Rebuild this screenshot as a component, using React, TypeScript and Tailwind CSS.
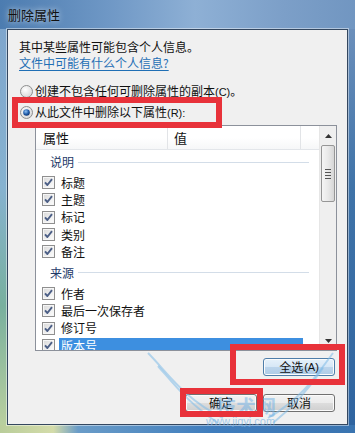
import React from "react";

const CJK = "font-['Microsoft_YaHei','Noto_Sans_CJK_SC',sans-serif]";

function Check() {
  return (
    <svg width="13" height="13" viewBox="0 0 13 13" className="shrink-0">
      <defs>
        <linearGradient id="cbg" x1="0" y1="0" x2="1" y2="1">
          <stop offset="0" stopColor="#dcdcdc" />
          <stop offset="1" stopColor="#fbfbfb" />
        </linearGradient>
      </defs>
      <rect x="0.5" y="0.5" width="12" height="12" fill="#f6f6f6" stroke="#8f8f8f" />
      <rect x="2" y="2" width="9" height="9" fill="url(#cbg)" />
      <path d="M3 6.3 L5.4 9 L10 3.2" stroke="#4c5f86" strokeWidth="1.9" fill="none" strokeLinejoin="round" />
    </svg>
  );
}

function Radio({ on }: { on?: boolean }) {
  return (
    <svg width="13" height="13" viewBox="0 0 13 13" className="shrink-0">
      <defs>
        <radialGradient id={on ? "rdon" : "rdoff"} cx="0.4" cy="0.35" r="0.7">
          <stop offset="0" stopColor="#ffffff" />
          <stop offset="1" stopColor="#d6d6d6" />
        </radialGradient>
        <radialGradient id="rdot" cx="0.4" cy="0.35" r="0.7">
          <stop offset="0" stopColor="#8fc2f5" />
          <stop offset="0.6" stopColor="#1e5aa8" />
          <stop offset="1" stopColor="#0e2f66" />
        </radialGradient>
      </defs>
      <circle cx="6.5" cy="6.5" r="6" fill={on ? "url(#rdon)" : "url(#rdoff)"} stroke="#8e8f8f" />
      {on && <circle cx="6.5" cy="6.5" r="3.3" fill="url(#rdot)" />}
    </svg>
  );
}

function Item({ label, selected }: { label: string; selected?: boolean }) {
  return (
    <div className="flex h-[17.3px] items-center">
      <div className="ml-[6px]">
        <Check />
      </div>
      <div
        className={
          "ml-[4px] flex h-[16px] items-center pl-[2px] " +
          (selected ? "w-[244px] bg-[#3d8fe0] text-white" : "text-[#111]")
        }
      >
        {label}
      </div>
    </div>
  );
}

function Group({ label }: { label: string }) {
  return (
    <div className="flex h-[20px] items-center pl-[14px] pr-[10px]">
      <span className="text-[#1e3a68]">{label}</span>
      <div className="ml-[4px] h-px flex-1 bg-[#d3dde8]" />
    </div>
  );
}

function Btn({ children, blue }: { children: React.ReactNode; blue?: boolean }) {
  return (
    <div
      className={
        "flex h-[18px] w-[72px] items-center justify-center rounded-[3px] border text-[12px] text-[#111] shadow-[inset_0_0_0_1px_#fbfbfb] " +
        (blue
          ? "border-[#4e7eaa] bg-[linear-gradient(#e6f1fa_0%,#d6e7f6_50%,#bcd5ec_50%,#aecbe6_100%)]"
          : "border-[#707070] bg-[linear-gradient(#f2f2f2_0%,#ebebeb_50%,#dddddd_50%,#cfcfcf_100%)]")
      }
    >
      {children}
    </div>
  );
}

export default function App() {
  return (
    <div className={"relative flex h-[433px] w-[355px] flex-col overflow-hidden bg-[#3f73a8] text-[12px] " + CJK}>
      {/* title bar */}
      <div className="flex h-[29px] items-center bg-[linear-gradient(90deg,#4c7cb0_0%,#6e97c5_30%,#8eb0d5_55%,#7c9fc8_80%,#7196c1_100%)] pl-[8px]">
        <span className="text-[13px] text-[#111] [text-shadow:0_0_6px_rgba(255,255,255,0.8)]">删除属性</span>
      </div>
      <div className="flex h-[396px]">
        <div className="w-[7px] bg-[linear-gradient(#7fa6cd_0%,#86b2d0_40%,#78b09e_70%,#b9cf9e_100%)]" />
        {/* client */}
        <div className="relative flex w-[341px] flex-col border border-[#34475f] bg-[#f0f0f0] pl-[11px] pt-[9px] shadow-[0_0_0_1px_rgba(255,255,255,0.45)]">
          <div className="h-[16px] leading-[16px] text-[#111]">其中某些属性可能包含个人信息。</div>
          <div className="h-[16px] leading-[16px]">
            <span className="text-[#1f6fb5] underline underline-offset-2">文件中可能有什么个人信息?</span>
          </div>
          <div className="mt-[12px] flex h-[16px] items-center">
            <div className="ml-[1px]">
              <Radio />
            </div>
            <span className="ml-[2px] text-[#111]">
              创建不包含任何可删除属性的副本<span className="font-['Liberation_Sans',sans-serif] text-[11px]">(C)</span>。
            </span>
          </div>
          <div className="mt-[5px] flex h-[16px] items-center">
            <div className="ml-[1px]">
              <Radio on />
            </div>
            <span className="ml-[2px] text-[#111]">
              从此文件中删除以下属性<span className="font-['Liberation_Sans',sans-serif] text-[11px]">(R):</span>
            </span>
          </div>

          {/* list box */}
          <div className="ml-[16px] mt-[5px] flex h-[226px] w-[302px] overflow-hidden border border-[#8c919b] bg-white">
            <div className="flex w-[283px] flex-col">
              <div className="flex h-[24px] shrink-0 border-b border-[#e3e6ea] bg-[linear-gradient(#ffffff_0%,#ffffff_50%,#f6f7f8_100%)] text-[13px] text-[#111]">
                <div className="flex w-[132px] items-center border-r border-[#e2e4e7] pl-[7px]">属性</div>
                <div className="flex w-[133px] items-center border-r border-[#e2e4e7] pl-[6px]">值</div>
                <div className="flex-1" />
              </div>
              <div className="flex flex-col pt-[2px] text-[12px]">
                <Group label="说明" />
                <div className="pt-[2px]">
                  <Item label="标题" />
                  <Item label="主题" />
                  <Item label="标记" />
                  <Item label="类别" />
                  <Item label="备注" />
                </div>
                <div className="mt-[2.5px]">
                  <Group label="来源" />
                </div>
                <div className="pt-[2px]">
                  <Item label="作者" />
                  <Item label="最后一次保存者" />
                  <Item label="修订号" />
                  <Item label="版本号" selected />
                </div>
              </div>
            </div>
            {/* scrollbar */}
            <div className="flex w-[17px] flex-col border-l border-[#e6e6e6] bg-[#efefef]">
              <div className="flex h-[19px] items-center justify-center">
                <svg width="7" height="4" viewBox="0 0 7 4">
                  <path d="M0 4 L3.5 0 L7 4 Z" fill="#333" />
                </svg>
              </div>
              <div className="mx-[1px] flex h-[57px] items-center justify-center rounded-[2px] border border-[#969696] bg-[linear-gradient(90deg,#f5f5f5_0%,#e9e9e9_50%,#d6d6d6_100%)]">
                <div className="flex flex-col gap-[2px]">
                  <div className="h-px w-[6px] bg-[#555]" />
                  <div className="h-px w-[6px] bg-[#555]" />
                  <div className="h-px w-[6px] bg-[#555]" />
                  <div className="h-px w-[6px] bg-[#555]" />
                </div>
              </div>
              <div className="flex-1" />
              <div className="flex h-[19px] items-center justify-center">
                <svg width="7" height="4" viewBox="0 0 7 4">
                  <path d="M0 0 L3.5 4 L7 0 Z" fill="#333" />
                </svg>
              </div>
            </div>
          </div>

          <div className="ml-[244px] mt-[7px]">
            <Btn blue>
              全选<span className="ml-[1px] font-['Liberation_Sans',sans-serif] text-[11px]">(A)</span>
            </Btn>
          </div>
          <div className="ml-[166px] mt-[18px] flex gap-[6px]">
            <Btn>确定</Btn>
            <Btn>取消</Btn>
          </div>

          {/* watermark */}
          <svg className="pointer-events-none absolute left-[120px] top-[318px]" width="221" height="80" viewBox="0 0 221 80">
            <g fill="none" stroke="#7fbbe8" strokeOpacity="0.55" strokeWidth="2">
              <path d="M20 5 C40 25 55 50 95 70" />
              <path d="M30 18 C45 35 60 55 90 75" />
              <path d="M205 5 C190 25 175 50 140 70" />
              <path d="M195 20 C185 35 170 55 145 75" />
            </g>
          </svg>
          <div className="pointer-events-none absolute left-[208px] top-[362px] text-[20px] font-bold text-[#6fb1e6] opacity-50">
            技术网
          </div>
          <div className="pointer-events-none absolute left-[198px] top-[383px] font-['Liberation_Sans',sans-serif] text-[11px] text-[#6fb1e6] opacity-60">
            www.jiqyj.com
          </div>

          {/* red highlight boxes */}
          <div className="pointer-events-none absolute left-[4px] top-[67px] h-[31px] w-[210px] border-[6px] border-[#e8323a]" />
          <div className="pointer-events-none absolute left-[222px] top-[314px] h-[41px] w-[115px] border-[6px] border-[#e8323a]" />
          <div className="pointer-events-none absolute left-[172px] top-[358px] h-[29px] w-[83px] border-[6px] border-[#e8323a]" />
        </div>
        <div className="w-[7px] bg-[linear-gradient(#6b8fbb_0%,#3f73a8_40%,#2f64a0_100%)]" />
      </div>
      <div className="h-[8px] bg-[linear-gradient(90deg,#b9cd9a_0%,#d4dcaa_15%,#6a9cc8_22%,#3f7dbd_60%,#3a74b0_100%)]" />
    </div>
  );
}
